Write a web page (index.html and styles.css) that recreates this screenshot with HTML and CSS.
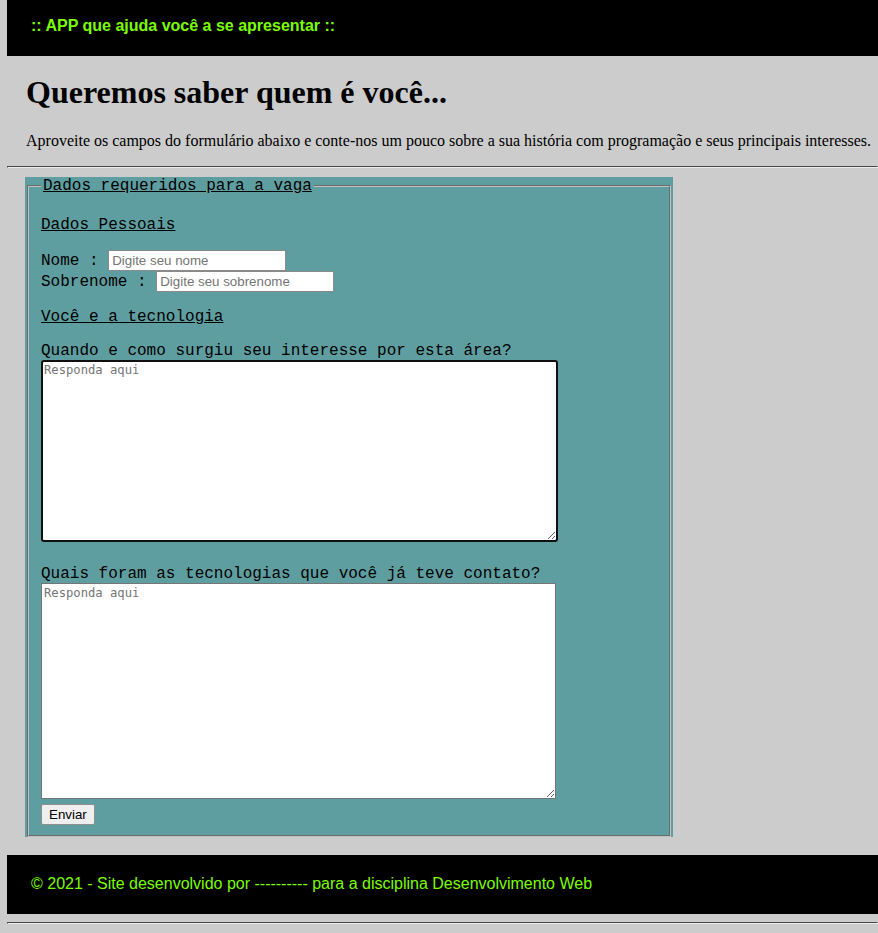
FILE: index.html
```html
<!DOCTYPE html>
<html lang="pt-BR">
<head>
<meta charset="utf-8">
<title>APP que ajuda você a se apresentar</title>
<link rel="stylesheet" href="styles.css">
</head>
<body>
<header class="topbar">:: APP que ajuda você a se apresentar ::</header>
<section class="intro">
  <h1 class="intro-title">Queremos saber quem é você...</h1>
  <p class="intro-text">Aproveite os campos do formulário abaixo e conte-nos um pouco sobre a sua história com programação e seus principais interesses.</p>
</section>
<hr class="rule rule-top">
<form class="form">
  <fieldset class="group">
    <legend class="group-legend">Dados requeridos para a vaga</legend>
    <p class="section-title">Dados Pessoais</p>
    <div class="personal">
      <div class="row"><label for="nome">Nome :</label> <input class="text-input" id="nome" type="text" placeholder="Digite seu nome"></div>
      <div class="row"><label for="sobrenome">Sobrenome :</label> <input class="text-input" id="sobrenome" type="text" placeholder="Digite seu sobrenome"></div>
    </div>
    <p class="section-title">Você e a tecnologia</p>
    <label class="question" for="q1">Quando e como surgiu seu interesse por esta área?</label>
    <textarea class="answer answer-focused" id="q1" placeholder="Responda aqui"></textarea>
    <label class="question question-gap" for="q2">Quais foram as tecnologias que você já teve contato?</label>
    <textarea class="answer answer-tall" id="q2" placeholder="Responda aqui"></textarea>
    <button class="submit" type="button">Enviar</button>
  </fieldset>
</form>
<footer class="footer">© 2021 - Site desenvolvido por ---------- para a disciplina Desenvolvimento Web</footer>
<hr class="rule rule-bottom">
</body>
</html>
```

FILE: styles.css
```css
html {
  background: #cccccc;
}

body {
  margin: 0 0 8px 7px;
  background: #cccccc;
  font-family: "Liberation Serif", "Times New Roman", serif;
  color: #000;
}

.topbar {
  box-sizing: border-box;
  height: 56px;
  padding: 17px 24px 0;
  background: #000;
  color: #7cfc00;
  font-family: "Liberation Sans", Arial, sans-serif;
  font-weight: bold;
  font-size: 16px;
  line-height: 18.4px;
}

.intro {
  padding: 18px 0 0 19px;
}

.intro-title {
  margin: 0 0 21.6px;
  font-size: 32px;
  font-weight: bold;
  line-height: 36.8px;
}

.intro-text {
  margin: 0;
  font-size: 16px;
  line-height: 18.4px;
  white-space: nowrap;
}

.rule {
  height: 0;
  border: 1px inset;
  border-color: #9a9a9a #eeeeee #eeeeee #9a9a9a;
}

.rule-top {
  margin: 15px 0 9px;
}

.rule-bottom {
  margin: 8px 0 0;
}

.form {
  width: 648px;
  margin: 0 0 18px 18px;
  background: #5f9ea0;
}

.group {
  margin: 0 2px;
  padding: 5.6px 12px 10px;
  border: 2px groove #c0c0c0;
  font-family: "Liberation Mono", "Courier New", monospace;
  font-size: 16px;
  line-height: normal;
}

.group-legend {
  padding: 0 2px;
  text-decoration: underline;
}

.section-title {
  margin: 16px 0;
  text-decoration: underline;
}

.personal {
  display: flex;
  flex-direction: column;
}

.row {
  height: 21px;
  display: flex;
  align-items: center;
  gap: 9.6px;
}

.text-input {
  box-sizing: border-box;
  width: 178px;
  height: 21px;
  margin: 0;
  padding: 1px 3px;
  border: 1px solid #8a8a8a;
  background: #fff;
  font-family: "Liberation Sans", Arial, sans-serif;
  font-size: 13.33px;
}

.text-input::placeholder {
  color: #757575;
}

.question {
  display: block;
}

.question-gap {
  margin-top: 23px;
}

.answer {
  display: block;
  box-sizing: border-box;
  margin: 0;
  padding: 2px;
  background: #fff;
  font-family: "DejaVu Sans Mono", Consolas, monospace;
  font-size: 12.2px;
  line-height: 15px;
  resize: both;
}

.answer::placeholder {
  color: #757575;
}

.answer-focused {
  width: 517px;
  height: 182px;
  border: 2px solid #101010;
  border-radius: 3px;
  padding: 1px;
  outline: none;
  box-shadow: inset 0 0 0 1px #ffffff;
}

.answer-tall {
  width: 515px;
  height: 216px;
  border: 1px solid #767676;
}

.submit {
  display: block;
  box-sizing: border-box;
  height: 21px;
  margin-top: 5px;
  padding: 1px 7px;
  border: 1px solid #8f8f8f;
  border-radius: 2px;
  background: #efefef;
  color: #000;
  font-family: "Liberation Sans", Arial, sans-serif;
  font-size: 13.33px;
}

.footer {
  box-sizing: border-box;
  height: 59px;
  padding: 20px 24px 0;
  background: #000;
  color: #7cfc00;
  font-family: "Liberation Sans", Arial, sans-serif;
  font-size: 16px;
  line-height: 18px;
}
```
